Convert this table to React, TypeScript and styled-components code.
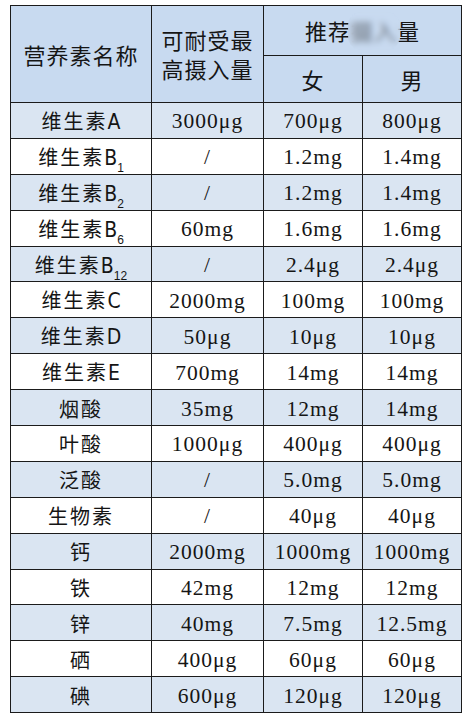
import React from 'react';
import styled, { createGlobalStyle } from 'styled-components';

const GlobalStyle = createGlobalStyle`
	html, body {
		margin: 0;
		padding: 0;
		background: #fff;
	}
	body {
		font-family: 'Noto Sans CJK SC', 'Noto Sans', sans-serif;
		color: #151515;
	}
`;

const Page = styled.div`
	position: relative;
	width: 474px;
	height: 721px;
	padding: 5px 0 0 10px;
	box-sizing: border-box;
`;

const Table = styled.table`
	border-collapse: collapse;
	table-layout: fixed;
	width: 451px;
	border: 1.5px solid #1b1b1b;

	td,
	th {
		border: 1.5px solid #1b1b1b;
		padding: 0;
		text-align: center;
		vertical-align: middle;
	}
`;

const HeadCell = styled.th<{ h?: number }>`
	background: #c8daf0;
	font-weight: 400;
	font-size: 22px;
	letter-spacing: 1px;
	line-height: 29px;
	height: ${(p) => (p.h ? `${p.h}px` : 'auto')};
`;

const Row = styled.tr<{ shaded?: boolean }>`
	height: 35.9px;
	background: ${(p) => (p.shaded ? '#dae5f2' : '#fff')};
`;

const NameCell = styled.td`
	font-size: 20px;
	letter-spacing: 2px;
	line-height: 24px;
	padding-top: 2px !important;
`;

const Latin = styled.span`
	font-family: 'Liberation Sans Narrow', 'DejaVu Sans Condensed', 'Liberation Sans', sans-serif;
	letter-spacing: 0;
	font-size: 21px;
`;

const Sub = styled.sub`
	font-family: 'Liberation Sans', sans-serif;
	font-size: 12px;
	letter-spacing: 0;
	vertical-align: -7px;
	line-height: 0;
`;

const ValueCell = styled.td`
	font-family: 'Liberation Serif', 'Times New Roman', serif;
	font-size: 21.5px;
	letter-spacing: 1px;
	line-height: 24px;
	padding-top: 2px !important;
`;

const Smudge = styled.div`
	position: absolute;
	left: 348px;
	top: 12px;
	width: 52px;
	height: 38px;
	border-radius: 14px;
	backdrop-filter: blur(3px);
	background: rgba(200, 218, 240, 0.45);
`;

type Item = {
	name: string;
	letter?: string;
	sub?: string;
	ul: string;
	female: string;
	male: string;
};

const data: Item[] = [
	{ name: '维生素', letter: 'A', ul: '3000μg', female: '700μg', male: '800μg' },
	{ name: '维生素', letter: 'B', sub: '1', ul: '/', female: '1.2mg', male: '1.4mg' },
	{ name: '维生素', letter: 'B', sub: '2', ul: '/', female: '1.2mg', male: '1.4mg' },
	{ name: '维生素', letter: 'B', sub: '6', ul: '60mg', female: '1.6mg', male: '1.6mg' },
	{ name: '维生素', letter: 'B', sub: '12', ul: '/', female: '2.4μg', male: '2.4μg' },
	{ name: '维生素', letter: 'C', ul: '2000mg', female: '100mg', male: '100mg' },
	{ name: '维生素', letter: 'D', ul: '50μg', female: '10μg', male: '10μg' },
	{ name: '维生素', letter: 'E', ul: '700mg', female: '14mg', male: '14mg' },
	{ name: '烟酸', ul: '35mg', female: '12mg', male: '14mg' },
	{ name: '叶酸', ul: '1000μg', female: '400μg', male: '400μg' },
	{ name: '泛酸', ul: '/', female: '5.0mg', male: '5.0mg' },
	{ name: '生物素', ul: '/', female: '40μg', male: '40μg' },
	{ name: '钙', ul: '2000mg', female: '1000mg', male: '1000mg' },
	{ name: '铁', ul: '42mg', female: '12mg', male: '12mg' },
	{ name: '锌', ul: '40mg', female: '7.5mg', male: '12.5mg' },
	{ name: '硒', ul: '400μg', female: '60μg', male: '60μg' },
	{ name: '碘', ul: '600μg', female: '120μg', male: '120μg' },
];

export default function App() {
	return (
		<Page>
			<GlobalStyle />
			<Table>
				<colgroup>
					<col style={{ width: 141 }} />
					<col style={{ width: 112 }} />
					<col style={{ width: 99 }} />
					<col style={{ width: 99 }} />
				</colgroup>
				<thead>
					<tr>
						<HeadCell rowSpan={2}>营养素名称</HeadCell>
						<HeadCell rowSpan={2}>
							可耐受最
							<br />
							高摄入量
						</HeadCell>
						<HeadCell colSpan={2} h={49}>
							推荐摄入量
						</HeadCell>
					</tr>
					<tr>
						<HeadCell h={46}>女</HeadCell>
						<HeadCell h={46}>男</HeadCell>
					</tr>
				</thead>
				<tbody>
					{data.map((d, i) => (
						<Row key={i} shaded={i % 2 === 0}>
							<NameCell>
								{d.name}
								{d.letter && <Latin>{d.letter}</Latin>}
								{d.sub && <Sub>{d.sub}</Sub>}
							</NameCell>
							<ValueCell>{d.ul}</ValueCell>
							<ValueCell>{d.female}</ValueCell>
							<ValueCell>{d.male}</ValueCell>
						</Row>
					))}
				</tbody>
			</Table>
			<Smudge />
		</Page>
	);
}
